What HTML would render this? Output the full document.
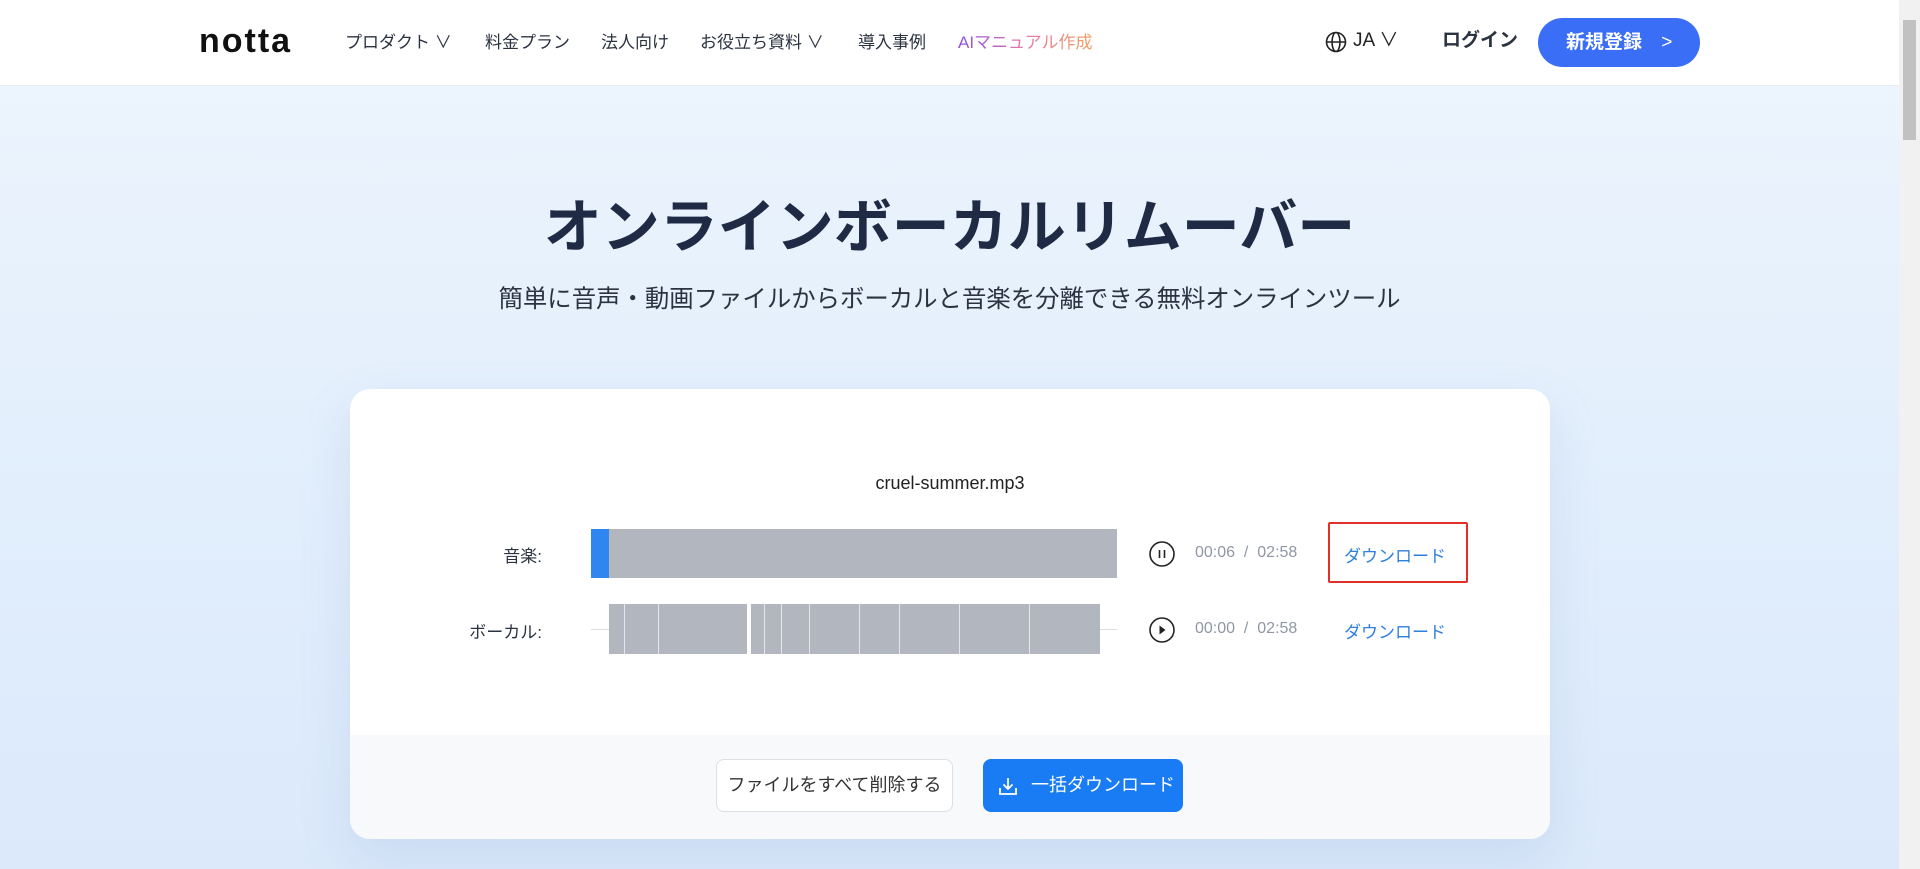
<!DOCTYPE html>
<html><head><meta charset="utf-8"><style>
*{margin:0;padding:0;box-sizing:border-box}
body{width:1920px;height:869px;overflow:hidden;font-family:"Liberation Sans","Noto Sans CJK JP",sans-serif;background:linear-gradient(180deg,#eef5fd 0%,#e3effc 50%,#dbe9fb 100%);position:relative;color:#1f2a44}
.nav{position:absolute;left:0;top:0;width:1899px;height:86px;background:#fff;border-bottom:1px solid #e8edf3}
.a{position:absolute;top:32px;font-size:17px;color:#2b3340;white-space:nowrap;line-height:22px}
.sb{position:absolute;right:0;top:0;width:21px;height:869px;background:#f1f1f1}
.sb div{position:absolute;left:4px;top:20px;width:13px;height:120px;background:#c1c1c1}
.abs{position:absolute;white-space:nowrap}
.card{position:absolute;left:350px;top:389px;width:1200px;height:450px;background:#fff;border-radius:20px;overflow:hidden;box-shadow:0 20px 50px rgba(120,150,200,.18)}
.foot{position:absolute;left:0;top:346px;width:1200px;height:104px;background:#f8f9fb}
.lab{position:absolute;font-size:17px;color:#2b3340;text-align:right;width:120px}
.time{position:absolute;font-size:16px;color:#9097a3}
.dl{position:absolute;font-size:17px;color:#2f7fdc}
.g{position:absolute;top:0;width:1px;height:50px;background:#e4e6ea}
</style></head><body>
<div class="nav">
<div class="abs" style="left:199px;top:22px;font-size:34px;letter-spacing:2px;color:#111;font-weight:bold">notta</div>
<div class="a" style="left:345px">プロダクト ∨</div>
<div class="a" style="left:485px">料金プラン</div>
<div class="a" style="left:601px">法人向け</div>
<div class="a" style="left:700px">お役立ち資料 ∨</div>
<div class="a" style="left:858px">導入事例</div>
<div class="a" style="left:958px;background:linear-gradient(90deg,#8a4fe0,#e879a8,#f0a060);-webkit-background-clip:text;color:transparent">AIマニュアル作成</div>
<svg class="abs" style="left:1325px;top:31px" width="22" height="22" viewBox="0 0 22 22" fill="none" stroke="#222" stroke-width="1.6"><circle cx="11" cy="11" r="9.5"/><ellipse cx="11" cy="11" rx="4" ry="9.5"/><path d="M1.5 11h19"/></svg>
<div class="a" style="left:1353px;font-size:19px;color:#222;top:30px">JA ∨</div>
<div class="a" style="left:1442px;font-size:19px;font-weight:bold;color:#2b3340;top:30px">ログイン</div>
<div class="abs" style="left:1538px;top:18px;width:162px;height:49px;border-radius:25px;background:#3b6ef6;color:#fff;font-size:19px;font-weight:bold;line-height:49px;padding-left:28px">新規登録 <span style="margin-left:14px;font-weight:normal">&gt;</span></div>
</div>
<div class="sb"><div></div></div>
<div class="abs" style="left:0;width:1899px;top:180px;text-align:center;font-size:58px;font-weight:bold;color:#1f2a44">オンラインボーカルリムーバー</div>
<div class="abs" style="left:0;width:1899px;top:280px;text-align:center;font-size:24.4px;color:#2b3340">簡単に音声・動画ファイルからボーカルと音楽を分離できる無料オンラインツール</div>
<div class="card">
<div class="abs" style="left:0;width:1200px;top:84px;text-align:center;font-size:18px;color:#222">cruel-summer.mp3</div>
<div class="lab" style="left:72px;top:153px">音楽:</div>
<div class="abs" style="left:241px;top:140px;width:526px;height:49px;background:#b2b7bf"></div>
<div class="abs" style="left:241px;top:140px;width:18px;height:49px;background:#2f86f0"></div>
<svg class="abs" style="left:799px;top:152px" width="26" height="26"><circle cx="13" cy="13" r="12" fill="none" stroke="#222" stroke-width="1.6"/><path d="M10.5 9v8M15.5 9v8" stroke="#222" stroke-width="1.6"/></svg>
<div class="time" style="left:845px;top:155px">00:06 &nbsp;/&nbsp; 02:58</div>
<div class="abs" style="left:978px;top:133px;width:140px;height:61px;border:2px solid #e0302a;border-radius:2px"></div>
<div class="dl" style="left:994px;top:153px">ダウンロード</div>
<div class="lab" style="left:72px;top:229px">ボーカル:</div>
<div class="abs" style="left:241px;top:240px;width:526px;height:1px;background:#ddd"></div>
<div class="abs" style="left:259px;top:215px;width:491px;height:50px;background:#b2b7bf;overflow:hidden">
<div class="g" style="left:15px"></div><div class="g" style="left:49px"></div><div class="g" style="left:138px;width:4px;background:#fff"></div><div class="g" style="left:155px"></div><div class="g" style="left:172px"></div><div class="g" style="left:200px"></div><div class="g" style="left:250px"></div><div class="g" style="left:290px"></div><div class="g" style="left:350px"></div><div class="g" style="left:420px"></div>
</div>
<svg class="abs" style="left:799px;top:228px" width="26" height="26"><circle cx="13" cy="13" r="12" fill="none" stroke="#222" stroke-width="1.6"/><path d="M10.5 8.5l6 4.5-6 4.5z" fill="#222"/></svg>
<div class="time" style="left:845px;top:231px">00:00 &nbsp;/&nbsp; 02:58</div>
<div class="dl" style="left:994px;top:229px">ダウンロード</div>
<div class="foot">
<div class="abs" style="left:366px;top:24px;width:237px;height:53px;background:#fff;border:1px solid #dcdfe4;border-radius:8px;text-align:center;line-height:51px;font-size:18px;color:#333">ファイルをすべて削除する</div>
<div class="abs" style="left:633px;top:24px;width:200px;height:53px;background:#1a7cf5;border-radius:8px;line-height:53px;font-size:18px;color:#fff;padding-left:48px">一括ダウンロード</div>
<svg class="abs" style="left:648px;top:41px" width="20" height="20" fill="none" stroke="#fff" stroke-width="1.8"><path d="M10 2v11M5.5 8.5L10 13l4.5-4.5M2 12v6h16v-6"/></svg>
</div>
</div>
</body></html>
